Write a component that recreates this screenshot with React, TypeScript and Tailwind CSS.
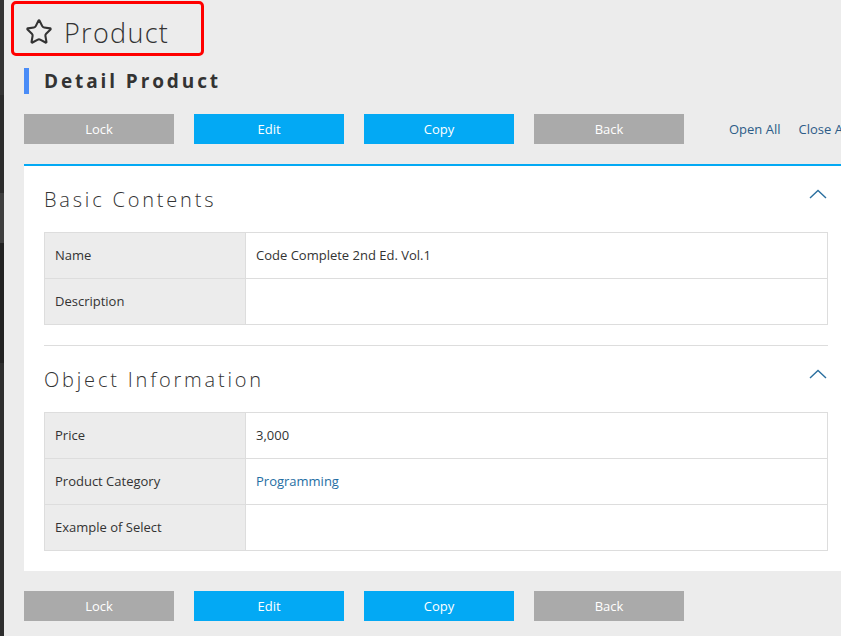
import { Star } from "lucide-react";

const rows1 = [
  { label: "Name", value: "Code Complete 2nd Ed. Vol.1" },
  { label: "Description", value: "" },
];

const rows2 = [
  { label: "Price", value: "3,000" },
  { label: "Product Category", value: "Programming", link: true },
  { label: "Example of Select", value: "" },
];

function ButtonRow() {
  return (
    <div className="flex items-center gap-5 h-[30px]">
      <button className="w-[150px] h-[30px] pt-[1px] bg-[#aaaaaa] text-white text-[13px]">Lock</button>
      <button className="w-[150px] h-[30px] pt-[1px] bg-[#03a9f4] text-white text-[13px]">Edit</button>
      <button className="w-[150px] h-[30px] pt-[1px] bg-[#03a9f4] text-white text-[13px]">Copy</button>
      <button className="w-[150px] h-[30px] pt-[1px] bg-[#aaaaaa] text-white text-[13px]">Back</button>
    </div>
  );
}

function ChevronUp() {
  return (
    <svg width="18" height="10" viewBox="0 0 18 10" className="shrink-0 mt-[3px]">
      <polyline points="1,9 9,1.5 17,9" fill="none" stroke="#2a6f9f" strokeWidth="1.4" />
    </svg>
  );
}

function Section({
  title,
  rows,
}: {
  title: string;
  rows: { label: string; value: string; link?: boolean }[];
}) {
  return (
    <div>
      <div className="flex items-start justify-between h-[26px] pr-[1px]">
        <h2 className="pt-[1px] text-[20px] leading-[26px] font-light tracking-[2.8px] text-[#333]">{title}</h2>
        <ChevronUp />
      </div>
      <table className="mt-5 w-full border-collapse text-[13px] text-[#333]">
        <tbody>
          {rows.map((r) => (
            <tr key={r.label} className="h-[46px]">
              <td className="w-[201px] border border-[#dddddd] bg-[#ececec] px-[10px] pt-[1px]">{r.label}</td>
              <td className={`border border-[#dddddd] px-[10px] pt-[1px] ${r.link ? "text-[#1f6ea3]" : ""}`}>
                {r.value}
              </td>
            </tr>
          ))}
        </tbody>
      </table>
    </div>
  );
}

export default function App() {
  return (
    <div className="flex w-[841px] h-[636px] overflow-hidden bg-[#ececec] font-['Open_Sans','Noto_Sans',sans-serif]">
      <div className="w-[4px] shrink-0 flex flex-col">
        <div className="h-[95px] bg-[#343434]" />
        <div className="h-[98px] bg-[#2b2b2b]" />
        <div className="h-[50px] bg-[#3e3e3e]" />
        <div className="h-[120px] bg-[#222222]" />
        <div className="flex-1 bg-[#2e2e2e]" />
      </div>
      <div className="pl-5 shrink-0 w-[844px]">
        <div className="relative flex items-center gap-[11px] h-[44px] mt-[10px] pl-[1px]">
          <div className="absolute left-[-13px] top-[-9px] w-[193px] h-[55px] border-[3px] border-[#ff0000] rounded-[5px]" />
          <Star size={28} strokeWidth={1.8} color="#333" />
          <span className="text-[27px] font-light tracking-[1.3px] text-[#333] leading-none">Product</span>
        </div>
        <div className="flex items-center h-[26px] mt-[14px]">
          <div className="w-[5px] h-[26px] bg-[#4a8cf7]" />
          <h1 className="ml-[15px] pt-[1px] text-[19px] font-bold tracking-[2.9px] text-[#333]">Detail Product</h1>
        </div>
        <div className="flex items-center mt-5 whitespace-nowrap">
          <ButtonRow />
          <a className="ml-[45px] pt-[1px] text-[13px] text-[#2d5c88]">Open All</a>
          <a className="ml-[18px] pt-[1px] text-[13px] text-[#2d5c88]">Close All</a>
        </div>
        <div className="mt-5 w-[824px] bg-white border-t-2 border-[#03a9f4] p-5">
          <Section title="Basic Contents" rows={rows1} />
          <div className="mt-5 pt-5 border-t border-[#dddddd]">
            <Section title="Object Information" rows={rows2} />
          </div>
        </div>
        <div className="mt-5">
          <ButtonRow />
        </div>
      </div>
    </div>
  );
}
